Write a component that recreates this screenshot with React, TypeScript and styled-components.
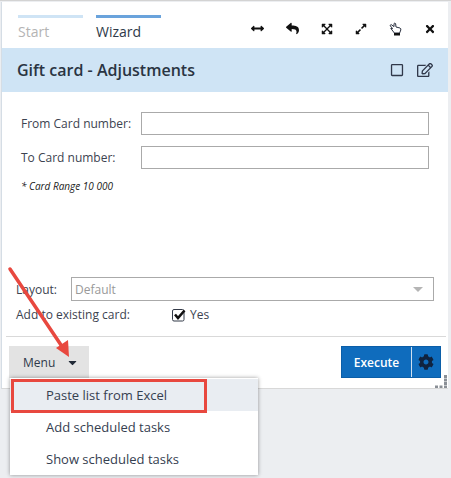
import React from 'react';
import styled, { createGlobalStyle } from 'styled-components';
import {
  FaArrowsAltH,
  FaCaretDown,
  FaCog,
  FaExpandAlt,
  FaExpandArrowsAlt,
  FaRegEdit,
  FaRegSquare,
  FaReply,
  FaTimes,
} from 'react-icons/fa';

const GlobalStyle = createGlobalStyle`
  html, body {
    margin: 0;
    padding: 0;
    background: #eceef1;
  }
  body {
    font-family: "Open Sans", "Liberation Sans", sans-serif;
    color: #333c4a;
  }
`;

export default function App() {
  return (
    <Page>
      <GlobalStyle />
      <Panel>
        <TopBar>
          <Tabs>
            <Tab>
              <TabBar />
              <TabLabel>Start</TabLabel>
            </Tab>
            <Tab $active>
              <TabBar $active />
              <TabLabel $active>Wizard</TabLabel>
            </Tab>
          </Tabs>
          <ToolIcons>
            <FaArrowsAltH size={13} />
            <FaReply size={13} />
            <FaExpandArrowsAlt size={12} />
            <FaExpandAlt size={12} />
            <svg width="13" height="14" viewBox="0 0 13 14">
              <path
                d="M1 3.5 L2.2 2.6 L5 4.6 L5 1.6 Q5.8 0.6 6.6 1.6 L7 5 L11 6 Q12.2 6.6 11.8 8 L10.6 11 L5.4 11 L1.8 6.4 L3.6 6.6 Z"
                fill="#fff"
                stroke="#2b3140"
                strokeWidth="1"
              />
              <rect x="5" y="11" width="6" height="2.5" fill="#111" />
            </svg>
            <FaTimes size={12} />
          </ToolIcons>
        </TopBar>
        <TitleBand>
          <Title>Gift card - Adjustments</Title>
          <TitleIcons>
            <FaRegSquare size={14} />
            <FaRegEdit size={16} />
          </TitleIcons>
        </TitleBand>
        <Form>
          <FieldRow>
            <FieldLabel>From Card number:</FieldLabel>
            <TextInput />
          </FieldRow>
          <FieldRow>
            <FieldLabel>To Card number:</FieldLabel>
            <TextInput />
          </FieldRow>
          <Note>* Card Range 10 000</Note>
        </Form>
        <Options>
          <LayoutRow>
            <OptionLabel>Layout:</OptionLabel>
            <SelectBox>
              <span>Default</span>
              <SelectCaret />
            </SelectBox>
          </LayoutRow>
          <CheckRow>
            <CheckLabel>Add to existing card:</CheckLabel>
            <CheckBox>
              <svg width="15" height="14" viewBox="0 0 15 14">
                <rect x="0.5" y="1.5" width="11.5" height="11.5" rx="1.5" fill="#fff" stroke="#333a48" />
                <path d="M3 6.5 L6 10 L12.5 2.5" fill="none" stroke="#111" strokeWidth="2.6" />
              </svg>
            </CheckBox>
            <span>Yes</span>
          </CheckRow>
        </Options>
        <Footer>
          <MenuWrap>
            <MenuButton>
              Menu
              <FaCaretDown size={13} color="#222b38" />
            </MenuButton>
            <Dropdown>
              <DropdownItem $active>
                Paste list from Excel
                <Highlight />
              </DropdownItem>
              <DropdownItem>Add scheduled tasks</DropdownItem>
              <DropdownItem>Show scheduled tasks</DropdownItem>
            </Dropdown>
          </MenuWrap>
          <ExecuteGroup>
            <ExecuteLabel>Execute</ExecuteLabel>
            <ExecuteGear>
              <FaCog size={16} color="#10233f" />
            </ExecuteGear>
          </ExecuteGroup>
        </Footer>
        <Grip width="12" height="13" viewBox="0 0 12 13">
          <path
            d="M9 0h3v3H9zM9 3.5h3v3H9zM9 7h3v3H9zM9 10.5h3v2.5H9zM4.5 10.5h3v2.5h-3zM0 10.5h3v2.5H0z"
            fill="#8a8f96"
          />
        </Grip>
      </Panel>
      <Arrow width="90" height="100" viewBox="0 0 90 100">
        <path d="M10 8 L63 87" stroke="#e8483f" strokeWidth="3.5" strokeLinecap="round" />
        <path d="M69 96 L56 87 L68 79 Z" fill="#e8483f" />
      </Arrow>
    </Page>
  );
}

const Page = styled.div`
  position: relative;
  width: 451px;
  height: 478px;
  overflow: hidden;
  padding-top: 1px;
  box-sizing: border-box;
  border-top: 1px solid #d3d3d3;
`;
const Panel = styled.div`
  position: relative;
  display: flex;
  flex-direction: column;
  width: 447px;
  height: 387px;
  margin-left: 1px;
  box-sizing: border-box;
  background: #fff;
  border-left: 1px solid #d5dde5;
  border-bottom: 1px solid #d8d8d8;
`;
const TopBar = styled.div`
  display: flex;
  justify-content: space-between;
  height: 46px;
  padding: 13px 12px 0 16px;
  box-sizing: border-box;
`;
const Tabs = styled.div`
  display: flex;
  gap: 13px;
`;
const Tab = styled.div<{ $active?: boolean }>`
  width: 65px;
`;
const TabBar = styled.div<{ $active?: boolean }>`
  height: 3px;
  background: ${(p) => (p.$active ? '#6aa3dc' : '#cfe4f5')};
`;
const TabLabel = styled.div<{ $active?: boolean }>`
  margin-top: 4px;
  font-size: 14px;
  line-height: 20px;
  color: ${(p) => (p.$active ? '#2f3a4a' : '#b4b4b4')};
`;
const ToolIcons = styled.div`
  display: flex;
  align-items: center;
  gap: 22px;
  height: 27px;
  color: #111;
`;
const TitleBand = styled.div`
  display: flex;
  align-items: center;
  justify-content: space-between;
  height: 44px;
  padding: 0 15px 0 15px;
  background: #cfe4f5;
`;
const Title = styled.div`
  font-size: 16px;
  font-weight: 600;
  color: #2a3442;
`;
const TitleIcons = styled.div`
  display: flex;
  align-items: center;
  gap: 13px;
  color: #30384a;
`;
const Form = styled.div`
  display: flex;
  flex-direction: column;
  flex: 1;
  gap: 11px;
  padding: 20px 19px 0 19px;
`;
const FieldRow = styled.div`
  display: flex;
  align-items: center;
  height: 23px;
`;
const FieldLabel = styled.div`
  width: 120px;
  font-size: 12px;
  color: #3c4350;
`;
const TextInput = styled.div`
  flex: 1;
  height: 100%;
  box-sizing: border-box;
  border: 1px solid #aaa;
`;
const Note = styled.div`
  font-size: 10px;
  font-style: italic;
  color: #222;
  line-height: 12px;
`;
const Options = styled.div`
  display: flex;
  flex-direction: column;
  gap: 3px;
  padding: 0 12px 11px 10px;
  border-bottom: 1px solid #d9d9d9;
  margin: 0 2px 0 4px;
`;
const LayoutRow = styled.div`
  display: flex;
  align-items: center;
  height: 24px;
  font-size: 12px;
`;
const OptionLabel = styled.div`
  width: 55px;
  color: #3c4350;
`;
const SelectBox = styled.div`
  display: flex;
  flex: 1;
  align-items: center;
  justify-content: space-between;
  height: 100%;
  padding: 0 10px 0 3px;
  box-sizing: border-box;
  border: 1px solid #aaa;
  color: #999;
`;
const SelectCaret = styled.div`
  width: 0;
  height: 0;
  border-left: 5px solid transparent;
  border-right: 5px solid transparent;
  border-top: 5px solid #b5b5b5;
`;
const CheckRow = styled.div`
  display: flex;
  align-items: center;
  height: 21px;
  font-size: 12px;
  color: #3c4350;
`;
const CheckLabel = styled.div`
  width: 156px;
`;
const CheckBox = styled.div`
  display: flex;
  width: 18px;
`;
const Footer = styled.div`
  display: flex;
  justify-content: space-between;
  height: 51px;
  padding: 9px 7px 0 7px;
  box-sizing: border-box;
`;
const MenuWrap = styled.div`
  position: relative;
`;
const MenuButton = styled.div`
  display: flex;
  align-items: center;
  gap: 11px;
  width: 80px;
  height: 32px;
  padding-left: 14px;
  box-sizing: border-box;
  background: #e3e3e3;
  font-size: 12px;
  color: #2f3a4a;
`;
const Dropdown = styled.div`
  position: absolute;
  top: 32px;
  left: 1px;
  z-index: 2;
  width: 248px;
  padding-top: 1px;
  background: #fff;
  box-shadow: 0 0 4px rgba(0, 0, 0, 0.4);
`;
const DropdownItem = styled.div<{ $active?: boolean }>`
  position: relative;
  height: 32px;
  padding-left: 36px;
  line-height: 32px;
  font-size: 13px;
  color: #354050;
  background: ${(p) => (p.$active ? '#e9edf2' : 'transparent')};
`;
const Highlight = styled.div`
  position: absolute;
  top: 0;
  left: 1px;
  width: 196px;
  height: 34px;
  box-sizing: border-box;
  border: 3px solid #e8483f;
`;
const ExecuteGroup = styled.div`
  display: flex;
  align-items: center;
  width: 100px;
  height: 32px;
  background: #0f6cbd;
  border: 1px solid #0b5ea8;
  box-sizing: border-box;
`;
const ExecuteLabel = styled.div`
  flex: 1;
  text-align: center;
  font-size: 12px;
  font-weight: 600;
  color: #fff;
`;
const ExecuteGear = styled.div`
  display: flex;
  align-items: center;
  justify-content: center;
  width: 28px;
  height: 100%;
  border-left: 1px solid #cfe0f0;
`;
const Grip = styled.svg`
  position: absolute;
  right: 1px;
  bottom: 0;
`;
const Arrow = styled.svg`
  position: absolute;
  top: 260px;
  left: 0;
  z-index: 3;
`;
